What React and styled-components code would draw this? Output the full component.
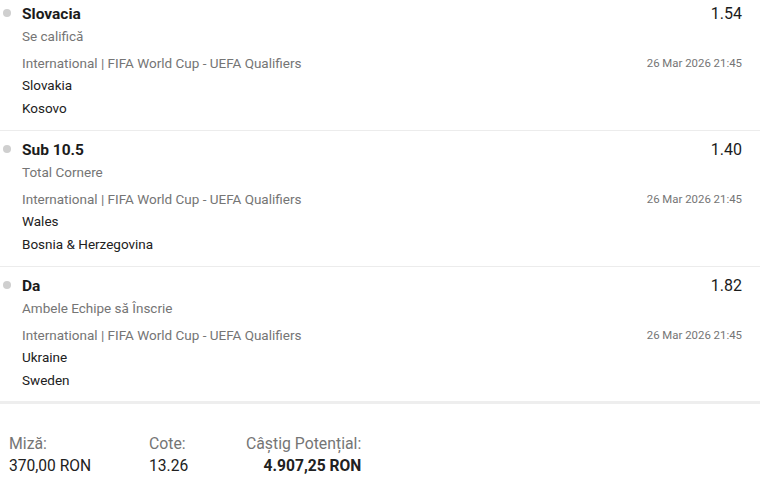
import React from "react";
import styled, { createGlobalStyle } from "styled-components";

const GlobalStyle = createGlobalStyle`
  html, body {
    margin: 0;
    padding: 0;
    background: #fff;
    font-family: Roboto, "Liberation Sans", sans-serif;
    overflow: hidden;
  }
`;

const Slip = styled.div`
  width: 760px;
  height: 485px;
  background: #fff;
  overflow: hidden;
`;

const List = styled.div`
  margin-top: -5px;
  border-bottom: 3px solid #eeeeee;
`;

const Selection = styled.div`
  position: relative;
  padding: 9px 18px 11px 22px;
  border-bottom: 1px solid #ececec;
  &:last-child {
    border-bottom: none;
    padding-bottom: 10px;
  }
`;

const Dot = styled.span`
  position: absolute;
  left: 3px;
  top: 14px;
  width: 8px;
  height: 8px;
  border-radius: 50%;
  background: #cfcfcf;
`;

const Row = styled.div`
  display: flex;
  justify-content: space-between;
  align-items: center;
  margin-top: ${(p) => p.$gap || 0}px;
`;

const Pick = styled.div`
  font-size: 15.5px;
  font-weight: 700;
  line-height: 20px;
  color: #1b1b1b;
`;

const Odds = styled.div`
  font-size: 16px;
  line-height: 20px;
  color: #1b1b1b;
`;

const Market = styled.div`
  font-size: 13.5px;
  line-height: 22px;
  margin-top: 1px;
  color: #757575;
`;

const League = styled.div`
  font-size: 13.5px;
  line-height: 22px;
  color: #757575;
`;

const Date = styled.div`
  font-size: 11.4px;
  line-height: 22px;
  color: #757575;
`;

const Team = styled.div`
  font-size: 13.5px;
  line-height: 22.5px;
  color: #212121;
`;

const Summary = styled.div`
  display: flex;
  padding: 29px 0 0 9px;
`;

const Col = styled.div`
  flex: none;
  width: ${(p) => (p.$w ? `${p.$w}px` : "auto")};
  text-align: ${(p) => p.$align || "left"};
  white-space: nowrap;
`;

const Label = styled.div`
  font-size: 15.8px;
  line-height: 22px;
  color: #757575;
`;

const Value = styled.div`
  font-size: 15.6px;
  line-height: 22px;
  color: #212121;
  font-weight: ${(p) => (p.$bold ? 700 : 400)};
`;

const bets = [
  {
    pick: "Slovacia",
    market: "Se califică",
    odds: "1.54",
    home: "Slovakia",
    away: "Kosovo",
  },
  {
    pick: "Sub 10.5",
    market: "Total Cornere",
    odds: "1.40",
    home: "Wales",
    away: "Bosnia & Herzegovina",
  },
  {
    pick: "Da",
    market: "Ambele Echipe să Înscrie",
    odds: "1.82",
    home: "Ukraine",
    away: "Sweden",
  },
];

export default function App() {
  return (
    <Slip>
      <GlobalStyle />
      <List>
        {bets.map((b) => (
          <Selection key={b.pick}>
            <Dot />
            <Row>
              <Pick>{b.pick}</Pick>
              <Odds>{b.odds}</Odds>
            </Row>
            <Market>{b.market}</Market>
            <Row $gap={5}>
              <League>International | FIFA World Cup - UEFA Qualifiers</League>
              <Date>26 Mar 2026 21:45</Date>
            </Row>
            <Team>{b.home}</Team>
            <Team>{b.away}</Team>
          </Selection>
        ))}
      </List>
      <Summary>
        <Col $w={140}>
          <Label>Miză:</Label>
          <Value>370,00 RON</Value>
        </Col>
        <Col $w={97}>
          <Label>Cote:</Label>
          <Value>13.26</Value>
        </Col>
        <Col $align="right">
          <Label>Câștig Potențial:</Label>
          <Value $bold>4.907,25 RON</Value>
        </Col>
      </Summary>
    </Slip>
  );
}
